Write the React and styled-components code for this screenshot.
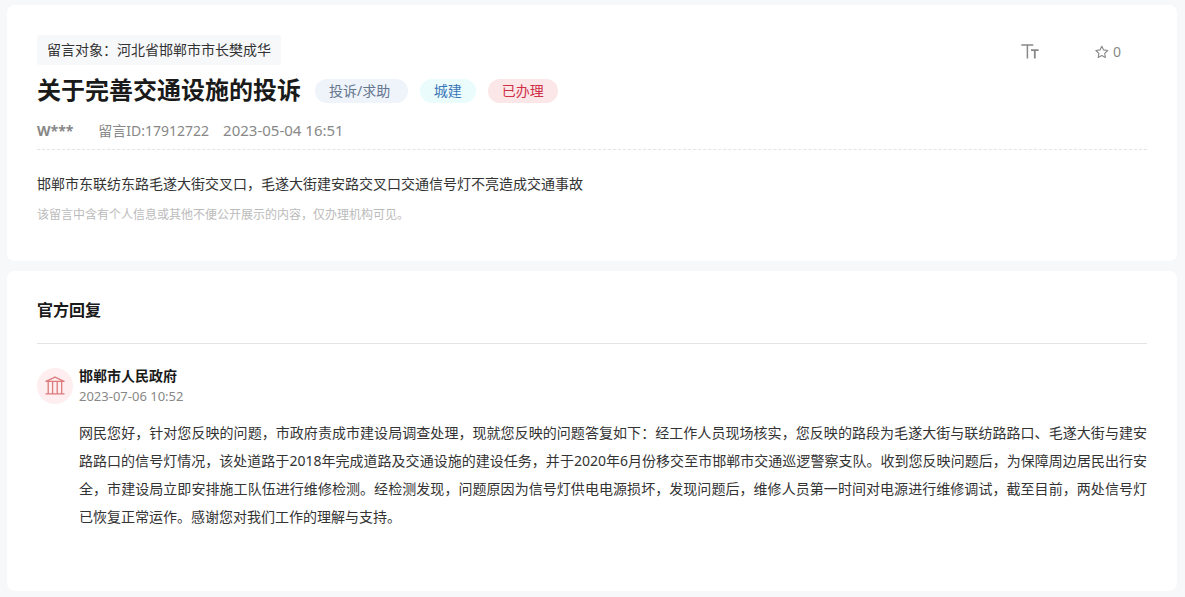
import React from "react";
import styled, { createGlobalStyle } from "styled-components";

const GlobalStyle = createGlobalStyle`
  * { box-sizing: border-box; }
  body {
    margin: 0;
    background: #f7f8fa;
    color: #333;
    font-family: "Noto Sans", "Noto Sans CJK SC", sans-serif;
    font-size: 14px;
  }
  h1, h2, h3, p { margin: 0; }
`;

const Page = styled.main`
  display: flex;
  flex-direction: column;
  gap: 10px;
  padding: 5px 8px 6px 7px;
`;

const Card = styled.section`
  background: #fff;
  border-radius: 8px;
  padding: 30px;
  padding-bottom: ${(p) => p.$bottom}px;
`;

const TopBar = styled.div`
  display: flex;
  align-items: center;
  justify-content: space-between;
  height: 30px;
`;

const Recipient = styled.span`
  padding: 0 10px;
  line-height: 30px;
  border-radius: 2px;
  background: #f7f8fa;
`;

const Tools = styled.div`
  display: flex;
  align-items: center;
  gap: 56px;
  padding-top: 3px;
  padding-right: 26px;
`;

const ToolButton = styled.button`
  display: flex;
  align-items: center;
  gap: 4px;
  padding: 0;
  border: 0;
  background: none;
  color: #888;
  font: inherit;
  line-height: 20px;
  cursor: pointer;
`;

const TitleRow = styled.div`
  display: flex;
  align-items: center;
  gap: 12px;
  height: 51px;
`;

const Title = styled.h1`
  margin-right: 2px;
  padding-bottom: 2px;
  color: #1a1a1a;
  font-size: 24px;
  line-height: 36px;
`;

const Tag = styled.span`
  padding: 0 14px;
  border-radius: 12px;
  line-height: 24px;
  white-space: pre;
  color: ${(p) => p.$color};
  background: ${(p) => p.$background};
`;

const Meta = styled.div`
  display: flex;
  gap: 14px;
  padding-bottom: 4px;
  border-bottom: 1px dashed #e4e4e4;
  color: #888;
  line-height: 29px;
`;

const Author = styled.strong`
  margin-right: 11px;
`;

const PostTime = styled.time`
  font-size: 15px;
`;

const Message = styled.p`
  margin-top: 20px;
  line-height: 28px;
`;

const Notice = styled.p`
  margin-top: 7px;
  color: #bbb;
  font-size: 12px;
  line-height: 20px;
`;

const SectionTitle = styled.h2`
  padding-bottom: 24px;
  border-bottom: 1px solid #e4e4e4;
  color: #1a1a1a;
  font-size: 16px;
  line-height: 18px;
`;

const Reply = styled.article`
  display: flex;
  gap: 6px;
  margin-top: 22px;
`;

const Avatar = styled.div`
  display: flex;
  flex: none;
  align-items: center;
  justify-content: center;
  width: 36px;
  height: 36px;
  margin-top: 2px;
  border-radius: 50%;
  background: #feeeef;
`;

const ReplyContent = styled.div`
  flex: 1;
  min-width: 0;
`;

const Agency = styled.h3`
  color: #1a1a1a;
  font-size: 14px;
  line-height: 20px;
`;

const ReplyTime = styled.time`
  display: block;
  color: #888;
  font-size: 13px;
  line-height: 21px;
`;

const ReplyText = styled.p`
  margin-top: 12px;
  line-height: 28px;
  text-align: justify;
`;

const TextSizeIcon = () => (
  <svg width="18" height="16" viewBox="0 0 18 16" fill="none" stroke="currentColor" strokeWidth="1.5" aria-hidden="true">
    <path d="M.3.9h12M6.4.9V14.6" />
    <path d="M10 6.1h7.6M13.8 6.1v8.5" strokeWidth="1.8" />
  </svg>
);

const StarIcon = () => (
  <svg width="14" height="14" viewBox="0 0 14 14" fill="none" stroke="currentColor" strokeWidth="1.1" strokeLinejoin="round" aria-hidden="true">
    <path d="M6.8 1.2 8.6 4.9l4.1.6-3 2.9.7 4.1-3.6-1.9-3.6 1.9.7-4.1-3-2.9 4.1-.6z" />
  </svg>
);

const GovernmentIcon = () => (
  <svg width="20" height="20" viewBox="0 0 20 20" fill="none" stroke="#dd7a7c" strokeWidth="1.3" strokeLinejoin="round" aria-hidden="true">
    <path d="M1 5.4 10 1.2l9 4.2zM.5 17.9h19M3.2 5.4v12.5M7.6 5.4v12.5M12.2 5.4v12.5M16.7 5.4v12.5" />
  </svg>
);

export default function App() {
  return (
    <>
      <GlobalStyle />
      <Page>
        <Card $bottom={36}>
          <TopBar>
            <Recipient>留言对象：河北省邯郸市市长樊成华</Recipient>
            <Tools>
              <ToolButton type="button" aria-label="字号">
                <TextSizeIcon />
              </ToolButton>
              <ToolButton type="button" aria-label="收藏 0">
                <StarIcon />
                <span>0</span>
              </ToolButton>
            </Tools>
          </TopBar>
          <TitleRow>
            <Title>关于完善交通设施的投诉</Title>
            <Tag $color="#65778f" $background="#eff3fa">{"投诉/求助 "}</Tag>
            <Tag $color="#3a76b8" $background="#ebfcfc">城建</Tag>
            <Tag $color="#cf3046" $background="#fbe6e8">已办理</Tag>
          </TitleRow>
          <Meta>
            <Author>W***</Author>
            <span>留言ID:17912722</span>
            <PostTime>2023-05-04 16:51</PostTime>
          </Meta>
          <Message>邯郸市东联纺东路毛遂大街交叉口，毛遂大街建安路交叉口交通信号灯不亮造成交通事故</Message>
          <Notice>该留言中含有个人信息或其他不便公开展示的内容，仅办理机构可见。</Notice>
        </Card>
        <Card $bottom={60}>
          <SectionTitle>官方回复</SectionTitle>
          <Reply>
            <Avatar>
              <GovernmentIcon />
            </Avatar>
            <ReplyContent>
              <Agency>邯郸市人民政府</Agency>
              <ReplyTime>2023-07-06 10:52</ReplyTime>
              <ReplyText>
                网民您好，针对您反映的问题，市政府责成市建设局调查处理，现就您反映的问题答复如下：经工作人员现场核实，您反映的路段为毛遂大街与联纺路路口、毛遂大街与建安路路口的信号灯情况，该处道路于2018年完成道路及交通设施的建设任务，并于2020年6月份移交至市邯郸市交通巡逻警察支队。收到您反映问题后，为保障周边居民出行安全，市建设局立即安排施工队伍进行维修检测。经检测发现，问题原因为信号灯供电电源损坏，发现问题后，维修人员第一时间对电源进行维修调试，截至目前，两处信号灯已恢复正常运作。感谢您对我们工作的理解与支持。
              </ReplyText>
            </ReplyContent>
          </Reply>
        </Card>
      </Page>
    </>
  );
}
